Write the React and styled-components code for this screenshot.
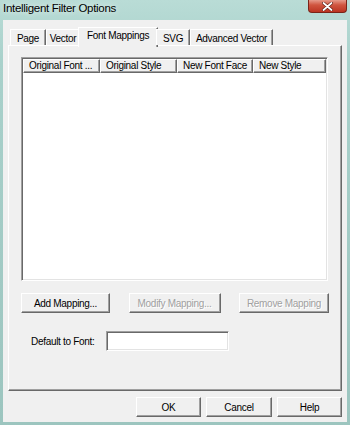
import React from 'react'
import styled, { createGlobalStyle, css } from 'styled-components'

const GlobalStyle = createGlobalStyle`
html, body {
  margin: 0;
  padding: 0;
  background: #9ec7c1;
}
* { box-sizing: border-box; }
`

const Frame = styled.div`
width: 350px;
height: 425px;
display: flex;
flex-direction: column;
background: linear-gradient(180deg, #b9dcd6 0px, #a9d1cb 60px, #9cc5bf 100%);
font-family: "Liberation Sans", Arial, sans-serif;
font-size: 10px;
letter-spacing: -0.3px;
color: #000;
`

const TitleBar = styled.div`
height: 20px;
display: flex;
justify-content: space-between;
align-items: flex-start;
padding-left: 3px;
`

const Title = styled.div`
font-family: "Liberation Sans", Arial, sans-serif;
font-size: 11.5px;
letter-spacing: -0.3px;
line-height: 12px;
margin-top: 2px;
color: #000;
text-shadow: 0 0 6px rgba(255,255,255,0.9);
`

const CloseButton = styled.div`
width: 39px;
height: 13px;
margin-right: 3px;
border: 1px solid #7a2418;
border-top: none;
border-radius: 0 0 4px 4px;
background: linear-gradient(180deg, #e69a8a 0px, #d0553f 5px, #bb3522 100%);
display: flex;
justify-content: center;
align-items: center;
`

const Client = styled.div`
flex: 1;
margin: 0 3px 3px 3px;
background: #f0f0f0;
padding: 7px 5px 0 5px;
display: flex;
flex-direction: column;
`

const TabStrip = styled.div`
display: flex;
align-items: flex-end;
height: 18px;
padding-left: 2px;
position: relative;
z-index: 1;
`

const Tab = styled.div`
width: ${p => p.$w}px;
height: 16px;
padding-top: 1px;
display: flex;
justify-content: center;
align-items: center;
background: #f0f0f0;
border-top: 1px solid #fff;
border-left: 1px solid #fff;
border-right: 1px solid #696969;
box-shadow: inset -1px 0 0 #a0a0a0;
white-space: nowrap;
${p => p.$active && css`
  height: 20px;
  margin: 0 -2px -2px -2px;
  padding: 0 0 4px 0;
`}
`

const Panel = styled.div`
height: 346px;
border-top: 1px solid #fff;
border-left: 1px solid #fff;
border-right: 1px solid #696969;
border-bottom: 1px solid #696969;
box-shadow: inset -1px -1px 0 #a0a0a0;
padding: 11px 0 0 12px;
display: flex;
flex-direction: column;
`

const ListView = styled.div`
width: 307px;
height: 224px;
background: #fff;
border-top: 1px solid #a0a0a0;
border-left: 1px solid #a0a0a0;
border-right: 1px solid #fff;
border-bottom: 1px solid #fff;
box-shadow: inset 1px 1px 0 #696969, inset -1px -1px 0 #e3e3e3;
padding: 1px;
`

const Header = styled.div`
display: grid;
grid-template-columns: 77px 77px 76px 1fr;
height: 14px;
`

const HeaderCell = styled.div`
background: #f0f0f0;
border-top: 1px solid #fff;
border-left: 1px solid #fff;
border-right: 1px solid #696969;
border-bottom: 1px solid #696969;
box-shadow: inset -1px -1px 0 #a0a0a0;
padding: 0 0 0 5px;
line-height: 11px;
white-space: nowrap;
overflow: hidden;
`

const ButtonRow = styled.div`
width: 308px;
display: flex;
justify-content: space-between;
margin-top: 12px;
`

const Button = styled.div`
width: ${p => p.$w}px;
height: 20px;
display: flex;
justify-content: center;
align-items: center;
background: #f0f0f0;
border-top: 1px solid #fff;
border-left: 1px solid #fff;
border-right: 1px solid #696969;
border-bottom: 1px solid #696969;
box-shadow: inset -1px -1px 0 #a0a0a0;
color: ${p => (p.$disabled ? '#a0a0a0' : '#000')};
text-shadow: ${p => (p.$disabled ? '1px 1px 0 #fff' : 'none')};
white-space: nowrap;
`

const FontRow = styled.div`
display: flex;
align-items: center;
margin-top: 18px;
padding-left: 10px;
`

const Label = styled.div`
width: 75px;
`

const TextBox = styled.div`
width: 123px;
height: 20px;
background: #fff;
border-top: 1px solid #a0a0a0;
border-left: 1px solid #a0a0a0;
border-right: 1px solid #fff;
border-bottom: 1px solid #fff;
box-shadow: inset 1px 1px 0 #696969, inset -1px -1px 0 #e3e3e3;
`

const Footer = styled.div`
display: flex;
justify-content: flex-end;
gap: 5px;
margin-top: 6px;
`

const columns = ['Original Font ...', 'Original Style', 'New Font Face', 'New Style']
const tabs = [
  { name: 'Page', w: 36 },
  { name: 'Vector', w: 34 },
  { name: 'Font Mappings', w: 80, active: true },
  { name: 'SVG', w: 34 },
  { name: 'Advanced Vector', w: 83 },
]

export default function App() {
  return (
    <>
      <GlobalStyle />
      <Frame>
        <TitleBar>
          <Title>Intelligent Filter Options</Title>
          <CloseButton>
            <svg width="11" height="9" viewBox="0 0 11 9">
              <path d="M1.5 1 L9.5 8 M9.5 1 L1.5 8" stroke="#5a1a10" strokeWidth="3" strokeLinecap="round" />
              <path d="M1.5 1 L9.5 8 M9.5 1 L1.5 8" stroke="#fff" strokeWidth="1.8" strokeLinecap="round" />
            </svg>
          </CloseButton>
        </TitleBar>
        <Client>
          <TabStrip>
            {tabs.map((t) => (
              <Tab key={t.name} $w={t.w} $active={t.active}>{t.name}</Tab>
            ))}
          </TabStrip>
          <Panel>
            <ListView>
              <Header>
                {columns.map((c) => <HeaderCell key={c}>{c}</HeaderCell>)}
              </Header>
            </ListView>
            <ButtonRow>
              <Button $w={89}>Add Mapping...</Button>
              <Button $w={92} $disabled>Modify Mapping...</Button>
              <Button $w={90} $disabled>Remove Mapping</Button>
            </ButtonRow>
            <FontRow>
              <Label>Default to Font:</Label>
              <TextBox />
            </FontRow>
          </Panel>
          <Footer>
            <Button $w={65}>OK</Button>
            <Button $w={66}>Cancel</Button>
            <Button $w={65}>Help</Button>
          </Footer>
        </Client>
      </Frame>
    </>
  )
}
